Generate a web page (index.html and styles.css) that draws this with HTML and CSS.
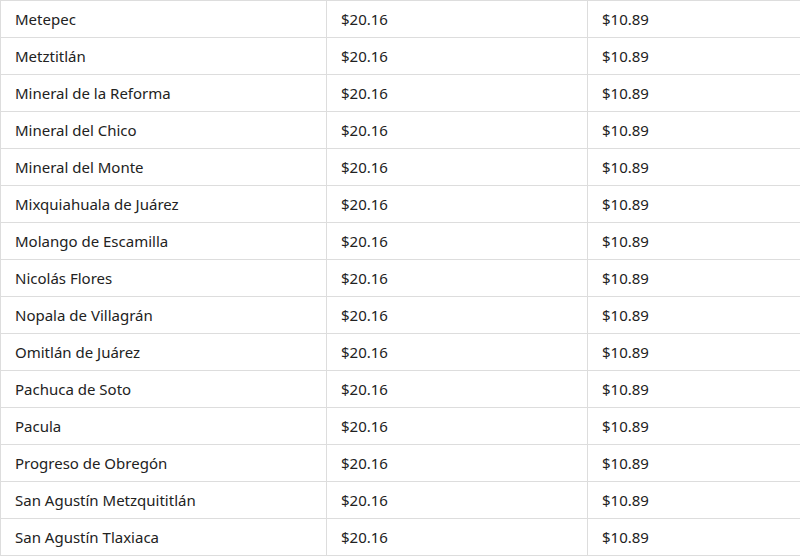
FILE: index.html
```html
<!DOCTYPE html>
<html>
<head>
<meta charset="utf-8">
<link rel="stylesheet" href="styles.css">
</head>
<body>
<table class="tarifas">
<colgroup><col class="c1"><col class="c2"><col class="c3"></colgroup>
<tbody>
<tr><td>Metepec</td><td>$20.16</td><td>$10.89</td></tr>
<tr><td>Metztitlán</td><td>$20.16</td><td>$10.89</td></tr>
<tr><td>Mineral de la Reforma</td><td>$20.16</td><td>$10.89</td></tr>
<tr><td>Mineral del Chico</td><td>$20.16</td><td>$10.89</td></tr>
<tr><td>Mineral del Monte</td><td>$20.16</td><td>$10.89</td></tr>
<tr><td>Mixquiahuala de Juárez</td><td>$20.16</td><td>$10.89</td></tr>
<tr><td>Molango de Escamilla</td><td>$20.16</td><td>$10.89</td></tr>
<tr><td>Nicolás Flores</td><td>$20.16</td><td>$10.89</td></tr>
<tr><td>Nopala de Villagrán</td><td>$20.16</td><td>$10.89</td></tr>
<tr><td>Omitlán de Juárez</td><td>$20.16</td><td>$10.89</td></tr>
<tr><td>Pachuca de Soto</td><td>$20.16</td><td>$10.89</td></tr>
<tr><td>Pacula</td><td>$20.16</td><td>$10.89</td></tr>
<tr><td>Progreso de Obregón</td><td>$20.16</td><td>$10.89</td></tr>
<tr><td>San Agustín Metzquititlán</td><td>$20.16</td><td>$10.89</td></tr>
<tr><td>San Agustín Tlaxiaca</td><td>$20.16</td><td>$10.89</td></tr>
</tbody>
</table>
</body>
</html>
```
FILE: styles.css
```css
html, body {
  margin: 0;
  padding: 0;
  background: #ffffff;
  overflow: hidden;
}
.tarifas {
  border-collapse: collapse;
  table-layout: fixed;
  width: 830px;
  font-family: "Noto Sans", "Open Sans", sans-serif;
  font-size: 15px;
  color: #222222;
}
.c1 { width: 326px; }
.c2 { width: 261px; }
.c3 { width: 243px; }
.tarifas td {
  border: 1px solid #dddddd;
  height: 37px;
  padding: 0 14px;
  box-sizing: border-box;
  vertical-align: middle;
  white-space: nowrap;
  line-height: 20px;
}
```
